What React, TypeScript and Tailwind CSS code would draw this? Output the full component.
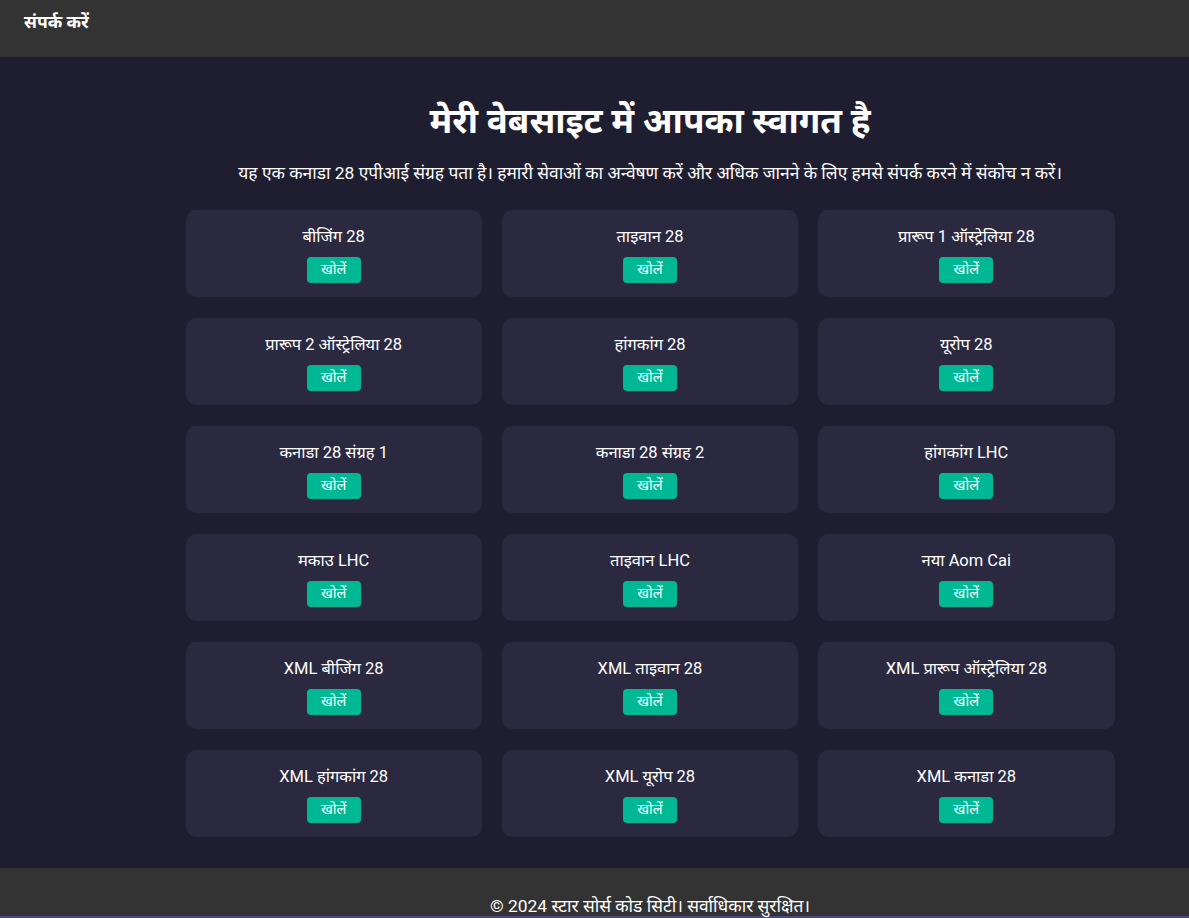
import React from "react";

const App: React.FC = () => {
  const items = [
    "बीजिंग 28",
    "ताइवान 28",
    "प्रारूप 1 ऑस्ट्रेलिया 28",
    "प्रारूप 2 ऑस्ट्रेलिया 28",
    "हांगकांग 28",
    "यूरोप 28",
    "कनाडा 28 संग्रह 1",
    "कनाडा 28 संग्रह 2",
    "हांगकांग LHC",
    "मकाउ LHC",
    "ताइवान LHC",
    "नया Aom Cai",
    "XML बीजिंग 28",
    "XML ताइवान 28",
    "XML प्रारूप ऑस्ट्रेलिया 28",
    "XML हांगकांग 28",
    "XML यूरोप 28",
    "XML कनाडा 28",
  ];

  return (
    <div
      className="min-h-[918px] bg-[#1f1e30] text-white overflow-hidden"
      style={{ fontFamily: 'Roboto, "Noto Sans", "Open Sans", sans-serif' }}
    >
      {/* Header */}
      <header className="h-[57px] bg-[#333333] px-6 pt-[10px]">
        <a className="text-[17.5px] font-bold leading-6 text-white">संपर्क करें</a>
      </header>

      {/* Main */}
      <main className="pl-[111px] pt-[43px] pb-[31px]">
        <div className="text-center">
          <h1 className="text-[35px] font-bold leading-[44px]">
            मेरी वेबसाइट में आपका स्वागत है
          </h1>
          <p className="mt-[17px] text-[17.4px] leading-6">
            यह एक कनाडा 28 एपीआई संग्रह पता है। हमारी सेवाओं का अन्वेषण करें और अधिक
            जानने के लिए हमसे संपर्क करने में संकोच न करें।
          </p>
        </div>

        {/* Grid */}
        <div className="mx-auto mt-[25px] grid w-[929px] grid-cols-3 gap-x-[20px] gap-y-[21px]">
          {items.map((name) => (
            <div
              key={name}
              className="flex h-[87px] flex-col items-center rounded-[10px] bg-[#2a2940] pt-[15px]"
            >
              <h3 className="text-[16.5px] leading-6">{name}</h3>
              <button className="mt-[8px] h-[26px] w-[54px] rounded-[4px] bg-[#00b894] text-[14.5px] leading-[26px] text-white">
                खोलें
              </button>
            </div>
          ))}
        </div>
      </main>

      {/* Footer */}
      <footer className="h-[48px] bg-[#333333] pl-[111px] pt-[26px] text-center">
        <p className="text-[17.4px] leading-6">
          © 2024 स्टार सोर्स कोड सिटी। सर्वाधिकार सुरक्षित।
        </p>
      </footer>
      <div className="h-[2px] bg-[#4b4b7a]" />
    </div>
  );
};

export default App;
